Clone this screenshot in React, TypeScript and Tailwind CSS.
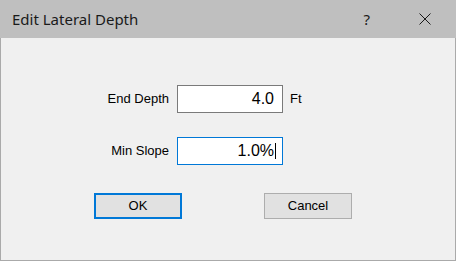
export default function App() {
  const sans = { fontFamily: '"Liberation Sans", Arial, sans-serif' };
  return (
    <div className="w-[456px] h-[261px] flex flex-col overflow-hidden" style={sans}>
      <div className="h-[38px] bg-[#bfbfbf] flex items-center shrink-0">
        <div
          className="ml-[12px] text-[15px] text-[#1a1a1a] leading-none"
          style={{ fontFamily: '"Segoe UI", "Noto Sans", "Open Sans", sans-serif' }}
        >
          Edit Lateral Depth
        </div>
        <div
          className="ml-auto mr-[49px] text-[15px] text-[#1a1a1a] leading-none"
          style={{ fontFamily: '"Segoe UI", "Noto Sans", sans-serif' }}
        >
          ?
        </div>
        <svg width="12" height="12" viewBox="0 0 12 12" className="mr-[25px]">
          <path d="M0.5 0.5 L11.5 11.5 M11.5 0.5 L0.5 11.5" stroke="#1a1a1a" strokeWidth="1" fill="none" />
        </svg>
      </div>
      <div className="flex-1 bg-[#f0f0f0] border-x border-b border-[#aaaaaa] flex flex-col text-[13px] text-black">
        <div className="mt-[47px] h-[28px] flex items-center">
          <div className="w-[168px] text-right">End Depth</div>
          <div className="ml-[8px] w-[106px] h-[28px] bg-white border border-[#7a7a7a] flex items-center justify-end pr-[8px] text-[16px]">
            4.0
          </div>
          <div className="ml-[7px]">Ft</div>
        </div>
        <div className="mt-[24px] h-[28px] flex items-center">
          <div className="w-[168px] text-right">Min Slope</div>
          <div className="ml-[8px] w-[106px] h-[28px] bg-white border border-[#0078d7] flex items-center justify-end pr-[6px] text-[16px]">
            <span>1.0%</span>
            <span className="ml-[1px] w-px h-[16px] bg-black" />
          </div>
        </div>
        <div className="mt-[28px] h-[26px] flex">
          <div className="ml-[93px] w-[88px] h-[26px] bg-[#e1e1e1] border-2 border-[#0078d7] flex items-center justify-center">
            OK
          </div>
          <div className="ml-[82px] w-[88px] h-[26px] bg-[#e1e1e1] border border-[#adadad] flex items-center justify-center">
            Cancel
          </div>
        </div>
      </div>
    </div>
  );
}
